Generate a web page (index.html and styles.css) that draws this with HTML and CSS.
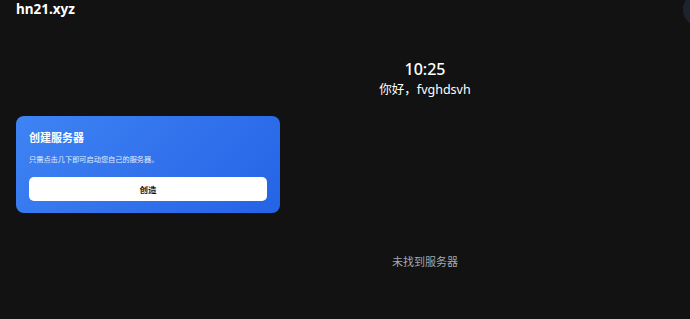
FILE: index.html
```html
<!DOCTYPE html>
<html lang="zh-CN">
<head>
  <meta charset="UTF-8" />
  <meta name="viewport" content="width=device-width, initial-scale=1.0"/>
  <title>hn21.xyz</title>
  <link rel="stylesheet" href="styles.css">
</head>
<body>
  <header class="topbar">
    <div class="logo">hn21.xyz</div>
    <div class="avatar"></div>
  </header>

  <main class="layout">
    <section class="side">
      <div class="create-card">
        <h2>创建服务器</h2>
        <p>只需点击几下即可启动您自己的服务器。</p>
        <button>创造</button>
      </div>
    </section>

    <section class="content">
      <div class="clock">10:25</div>
      <div class="greeting">你好，fvghdsvh</div>
      <div class="empty">未找到服务器</div>
    </section>
  </main>
</body>
</html>
```

FILE: styles.css
```css
body {
  margin: 0;
  background: #121212;
  color: #fff;
  font-family: "Noto Sans", "Noto Sans CJK SC", sans-serif;
  height: 319px;
  overflow: hidden;
}

.topbar {
  position: relative;
  height: 18px;
  padding: 0 16px;
}

.logo {
  font-size: 13.5px;
  font-weight: 700;
  line-height: 18px;
}

.avatar {
  position: absolute;
  top: -8px;
  right: -28px;
  width: 35px;
  height: 35px;
  border-radius: 50%;
  background: #1d2430;
}

.layout {
  display: grid;
  grid-template-columns: 264px 1fr;
  gap: 16px;
  padding: 0 136px 0 16px;
}

.side {
  padding-top: 98px;
}

.create-card {
  background: linear-gradient(135deg, #3f83f3, #2563e6);
  border-radius: 8px;
  padding: 12px 13px 12px;
}

.create-card h2 {
  margin: 0;
  font-size: 11px;
  font-weight: 700;
  line-height: 19px;
}

.create-card p {
  margin: 6px 0 12px;
  font-size: 7.2px;
  line-height: 12px;
  color: #e6edfb;
}

.create-card button {
  display: block;
  width: 100%;
  height: 24px;
  background: #fff;
  color: #111;
  border: none;
  border-radius: 5px;
  font-family: inherit;
  font-size: 8.5px;
  font-weight: 700;
  cursor: pointer;
}

.content {
  display: flex;
  flex-direction: column;
  align-items: center;
  padding-top: 40px;
}

.clock {
  font-size: 16px;
  font-weight: 500;
  line-height: 22px;
}

.greeting {
  font-size: 12.5px;
  line-height: 20px;
}

.empty {
  margin-top: 154px;
  font-size: 11px;
  line-height: 16px;
  color: #a3a8b0;
}
```
